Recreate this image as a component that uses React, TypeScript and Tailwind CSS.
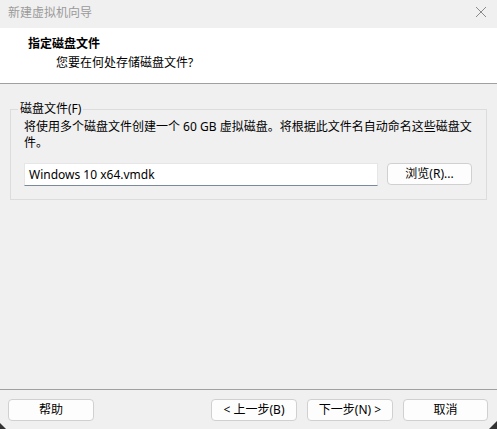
import React from "react";

const font = { fontFamily: '"Noto Sans", "Noto Sans CJK SC", sans-serif' };

function WinButton({ label, className = "" }: { label: string; className?: string }) {
  return (
    <button
      className={
        "h-[22px] rounded-[4px] border border-[#d0d0d0] bg-[#fdfdfd] text-[12px] leading-none text-black flex items-center justify-center " +
        className
      }
    >
      {label}
    </button>
  );
}

export default function App() {
  return (
    <div
      className="w-[497px] h-[429px] bg-[#f0f0f0] flex flex-col text-[12px] text-black overflow-hidden relative"
      style={font}
    >
      {/* title bar */}
      <div className="h-[28px] flex items-center justify-between pl-[8px] pr-[10px]">
        <span className="text-[#9a9a9a] text-[12px] leading-none -mt-[2px]">新建虚拟机向导</span>
        <svg width="12" height="12" viewBox="0 0 12 12" className="-mt-[4px]">
          <path d="M1 1 L11 11 M11 1 L1 11" stroke="#8a8a8a" strokeWidth="1" />
        </svg>
      </div>

      {/* header */}
      <div className="h-[56px] bg-white border-b border-[#a0a0a0] pt-[8px] pl-[28px]">
        <div className="font-bold text-[12px] leading-[16px]">指定磁盘文件</div>
        <div className="pl-[28px] mt-[3px] leading-[16px]">您要在何处存储磁盘文件?</div>
      </div>

      {/* body */}
      <div className="flex-1 px-[10px] pt-[18px]">
        <fieldset className="border border-[#dcdcdc] h-[98px] pl-[13px] pr-[14px] m-0">
          <legend className="ml-[-6px] px-[2px] leading-[14px]">磁盘文件(F)</legend>
          <div className="leading-[16px] mt-[3px] whitespace-nowrap">
            将使用多个磁盘文件创建一个 60 GB 虚拟磁盘。将根据此文件名自动命名这些磁盘文
            <br />
            件。
          </div>
          <div className="flex items-start mt-[12px] gap-[9px]">
            <div className="w-[354px] h-[23px] bg-white border border-[#e6e6e6] border-b-[#7a8a9c] flex items-center pl-[4px]">
              <span className="text-[12px] leading-none">Windows 10 x64.vmdk</span>
            </div>
            <WinButton label="浏览(R)..." className="w-[85px]" />
          </div>
        </fieldset>
      </div>

      {/* footer */}
      <div className="h-[40px] border-t border-[#a0a0a0] flex items-start pt-[9px] px-[8px]">
        <WinButton label="帮助" className="w-[86px]" />
        <div className="flex-1" />
        <WinButton label="< 上一步(B)" className="w-[86px]" />
        <WinButton label="下一步(N) >" className="w-[86px] ml-[10px]" />
        <WinButton label="取消" className="w-[85px] ml-[10px] mr-[1px]" />
      </div>

      {/* resize grip */}
      <svg width="8" height="8" viewBox="0 0 8 8" className="absolute right-0 bottom-0">
        <path d="M8 0 L8 8 L0 8 Z" fill="#333" />
      </svg>
      <svg width="6" height="6" viewBox="0 0 6 6" className="absolute left-0 bottom-0">
        <path d="M0 0 L6 6 L0 6 Z" fill="#333" />
      </svg>
    </div>
  );
}
